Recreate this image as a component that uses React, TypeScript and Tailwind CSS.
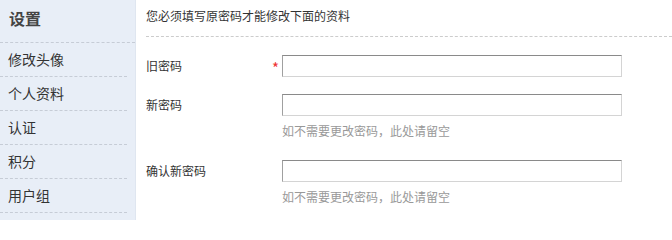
const font = { fontFamily: '"Noto Sans CJK SC", "Noto Sans", sans-serif' };

const menu = ["修改头像", "个人资料", "认证", "积分", "用户组"];

function Field({
  label,
  required,
  hint,
}: {
  label: string;
  required?: boolean;
  hint?: string;
}) {
  return (
    <div>
      <div className="flex items-center h-[22px]">
        <span className="w-[126px] text-[12px] text-[#333] leading-[16px]">{label}</span>
        <span className="w-[10px] text-[15px] text-[#e33] leading-[16px] pt-[3px]">{required ? "*" : ""}</span>
        <input
          type="password"
          className="w-[340px] h-[22px] bg-white border border-[#d4d4d4] border-t-[#8a8a8a] border-l-[#a0a0a0] outline-none"
        />
      </div>
      {hint && (
        <p className="ml-[136px] mt-[7px] text-[12px] text-[#999] leading-[16px]">{hint}</p>
      )}
    </div>
  );
}

export default function App() {
  return (
    <div className="flex w-[672px] h-[220px] bg-white overflow-hidden" style={font}>
      {/* 侧栏 */}
      <aside className="w-[136px] h-full bg-[#e8eef7] border-r border-[#dfe6f0] shrink-0">
        <div className="h-[43px] border-b border-dashed border-[#c6ccd6] pl-[9px] pt-[7px]">
          <h2 className="text-[16px] font-bold text-[#444] leading-[22px]">设置</h2>
        </div>
        <ul className="mr-[8px]">
          {menu.map((m) => (
            <li
              key={m}
              className="h-[34px] flex items-center pl-[8px] border-b border-dashed border-[#c6ccd6] text-[14px] text-[#333]"
            >
              {m}
            </li>
          ))}
        </ul>
      </aside>

      {/* 内容 */}
      <main className="flex-1 pl-[10px]">
        <div className="h-[37px] border-b border-dashed border-[#cccccc] pt-[8px]">
          <p className="text-[12px] text-[#333] leading-[16px]">您必须填写原密码才能修改下面的资料</p>
        </div>
        <div className="pt-[18px] flex flex-col">
          <Field label="旧密码" required />
          <div className="mt-[17px]">
            <Field label="新密码" hint="如不需要更改密码，此处请留空" />
          </div>
          <div className="mt-[21px]">
            <Field label="确认新密码" hint="如不需要更改密码，此处请留空" />
          </div>
        </div>
      </main>
    </div>
  );
}
